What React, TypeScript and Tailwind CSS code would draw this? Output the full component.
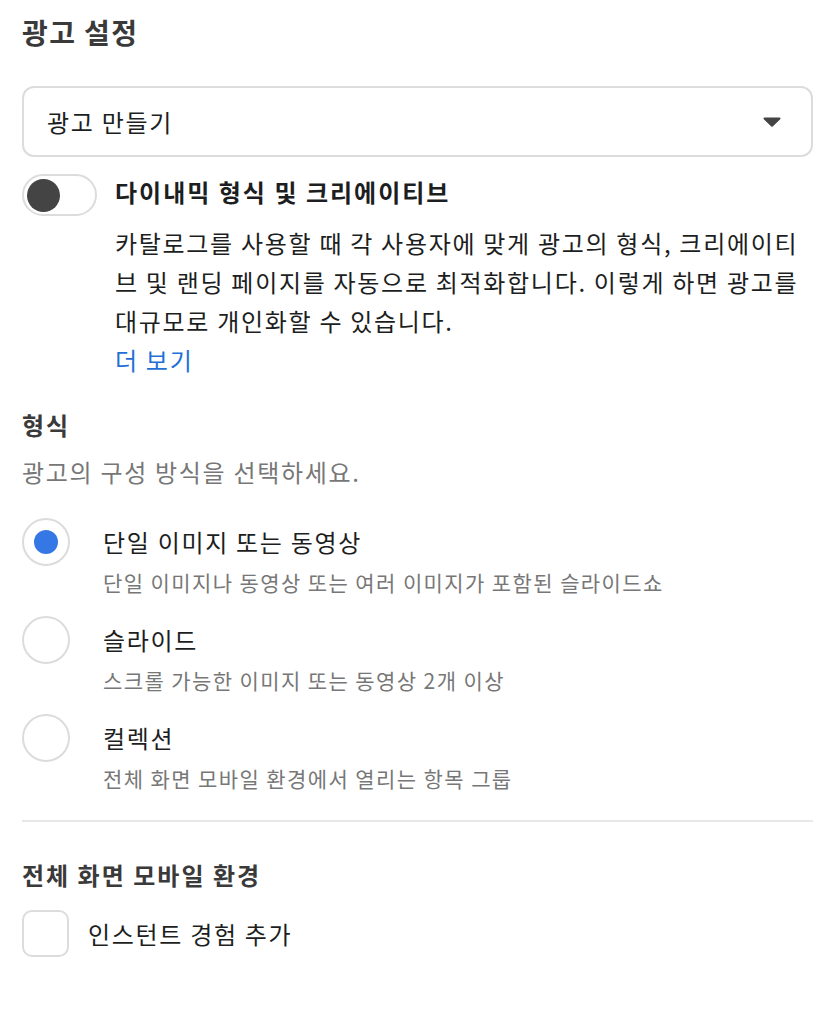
import React, { useState } from 'react';

const options = [
  { id: 'single', label: '단일 이미지 또는 동영상', desc: '단일 이미지나 동영상 또는 여러 이미지가 포함된 슬라이드쇼' },
  { id: 'carousel', label: '슬라이드', desc: '스크롤 가능한 이미지 또는 동영상 2개 이상' },
  { id: 'collection', label: '컬렉션', desc: '전체 화면 모바일 환경에서 열리는 항목 그룹' },
];

export default function App() {
  const [format, setFormat] = useState('single');
  const [dynamic, setDynamic] = useState(false);
  const [instant, setInstant] = useState(false);

  return (
    <div className="w-[830px] min-h-[1018px] bg-white px-[22px] pt-[15px] text-[#1c1e21] font-['Noto_Sans_CJK_KR','Noto_Sans',sans-serif]">
      <h1 className="text-[28px] leading-[34px] font-bold tracking-[1.4px] text-[#3a3a3a]">광고 설정</h1>

      {/* Ad creation dropdown */}
      <button className="mt-[37px] flex h-[71px] w-[791px] items-center justify-between rounded-[12px] border-2 border-[#dcdcdc] pl-[23px] pr-[30px] text-left">
        <span className="text-[24px] leading-[34px] tracking-[1.7px]">광고 만들기</span>
        <svg width="18" height="10" viewBox="0 0 18 10">
          <path d="M1.5 0.5h15a1 1 0 0 1 0.7 1.7l-7.5 7.3a1 1 0 0 1-1.4 0L0.8 2.2A1 1 0 0 1 1.5 0.5z" fill="#444" />
        </svg>
      </button>

      {/* Dynamic format toggle */}
      <div className="mt-[15px] flex items-start gap-[18px]">
        <button
          onClick={() => setDynamic(!dynamic)}
          className={`mt-[2px] flex h-[42px] w-[75px] shrink-0 items-center rounded-full border-2 border-[#dcdcdc] px-[3px] ${dynamic ? 'justify-end' : 'justify-start'}`}
        >
          <span className="h-[33px] w-[33px] rounded-full bg-[#444]" />
        </button>
        <div className="flex-1">
          <div className="text-[24px] leading-[40px] font-bold tracking-[2px]">다이내믹 형식 및 크리에이티브</div>
          <p className="mt-[11px] text-[24px] leading-[39px] tracking-[1.7px]">
            카탈로그를 사용할 때 각 사용자에 맞게 광고의 형식, 크리에이티브 및 랜딩 페이지를 자동으로 최적화합니다. 이렇게 하면 광고를 대규모로 개인화할 수 있습니다.
          </p>
          <a className="block text-[24px] leading-[39px] tracking-[1.7px] text-[#1f6fd6]">더 보기</a>
        </div>
      </div>

      {/* Format */}
      <h2 className="mt-[29px] text-[24px] leading-[34px] font-bold tracking-[2px] text-[#3a3a3a]">형식</h2>
      <p className="mt-[13px] text-[24px] leading-[34px] tracking-[1.7px] text-[#777]">광고의 구성 방식을 선택하세요.</p>

      <div className="mt-[29px] flex flex-col gap-[14px]">
        {options.map(o => (
          <label key={o.id} className="flex items-start gap-[33px] cursor-pointer" onClick={() => setFormat(o.id)}>
            <span className="flex h-[48px] w-[48px] shrink-0 items-center justify-center rounded-full border-2 border-[#dcdcdc]">
              {format === o.id && <span className="h-[24px] w-[24px] rounded-full bg-[#3578e5]" />}
            </span>
            <span className="pt-[4px]">
              <span className="block text-[24px] leading-[40px] tracking-[1.7px]">{o.label}</span>
              <span className="block text-[21px] leading-[40px] tracking-[1.4px] text-[#777]">{o.desc}</span>
            </span>
          </label>
        ))}
      </div>

      <div className="mt-[22px] h-[2px] w-[791px] bg-[#e8e8e8]" />

      {/* Full screen mobile experience */}
      <h2 className="mt-[36px] text-[24px] leading-[34px] font-bold tracking-[2px] text-[#3a3a3a]">전체 화면 모바일 환경</h2>
      <label className="mt-[18px] flex items-center gap-[19px] cursor-pointer" onClick={() => setInstant(!instant)}>
        <span className={`h-[47px] w-[47px] rounded-[10px] border-2 ${instant ? 'border-[#3578e5] bg-[#3578e5]' : 'border-[#dcdcdc]'}`} />
        <span className="text-[24px] leading-[34px] tracking-[1.7px]">인스턴트 경험 추가</span>
      </label>
    </div>
  );
}
